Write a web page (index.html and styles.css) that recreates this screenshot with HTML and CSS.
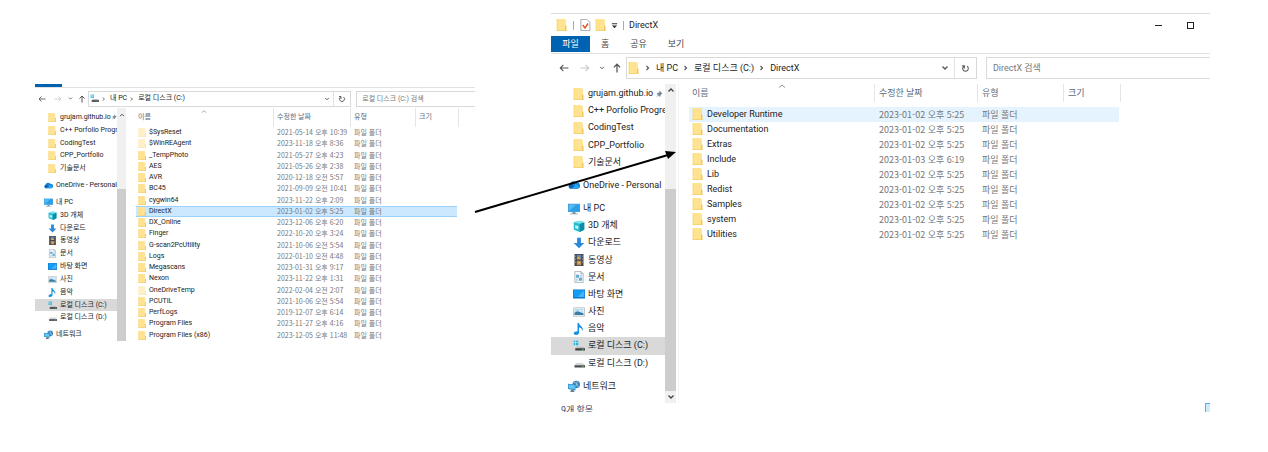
FILE: index.html
```html
<!DOCTYPE html>
<html lang="ko">
<head>
<meta charset="utf-8">
<title>DirectX</title>
<link rel="stylesheet" href="styles.css">
</head>
<body>
<svg class="sprite" aria-hidden="true">
  <symbol id="folder" viewBox="0 0 16 16"><path d="M1 0h11v16H1z" fill="#ffe391"/><path d="M1 0h1v16H1z" fill="#f8d673"/><path d="M12 1h1v9h-1z" fill="#fbdc7c"/><path d="M12 9h2v7h-2z" fill="#f0c75a"/><path d="M1 15h13v1H1z" fill="#f3cd66"/></symbol>
  <symbol id="cloud" viewBox="0 0 16 16"><path d="M4 13a4 4 0 0 1-1-7 4.500 4.500 0 0 1 8-1 4 4 0 0 1 2 8z" fill="#1683d8"/><path d="M4 13l6-6 3 1a3 3 0 0 1 0 5z" fill="#2aa5f0"/><path d="M1 9a3 3 0 0 1 3-3l5 3-5 4a3 3 0 0 1-3-4z" fill="#0b62b5"/></symbol>
  <symbol id="pc" viewBox="0 0 16 16"><path d="M0 1h16v11H0z" fill="#3b9ad9"/><path d="M1 2h14v9H1z" fill="#52bdf5"/><path d="M1 11L11 2h4v9z" fill="#2c9fe6"/><path d="M6 12h4v2h3v1H3v-1h3z" fill="#7d96a8"/></symbol>
  <symbol id="cube" viewBox="0 0 16 16"><path d="M1 3l8-2 6 2v10l-6 3-8-3z" fill="#28bdd1"/><path d="M9 5l6-2v10l-6 3z" fill="#0c8ca8"/><path d="M1 3l8-2 6 2-6 2z" fill="#7be5ed"/><path d="M3 7l4 1v4l-4-1z" fill="#c3f4f7"/></symbol>
  <symbol id="down" viewBox="0 0 16 16"><path d="M5.500 1h5v7H15l-7 7-7-7h4.500z" fill="#2b88d8"/></symbol>
  <symbol id="film" viewBox="0 0 16 16"><path d="M2 0h12v16H2z" fill="#45464d"/><path d="M5 1h6v6H5z" fill="#5c83c4"/><path d="M5 9h6v6H5z" fill="#b18b55"/><path d="M7 3l4 4H5zM6 10h4v3H6z" fill="#e0b04f"/><path d="M3 2h1v2H3zm0 4h1v2H3zm0 4h1v2H3zm9-8h1v2h-1zm0 4h1v2h-1zm0 4h1v2h-1z" fill="#999"/></symbol>
  <symbol id="doc" viewBox="0 0 16 16"><path d="M2.500.5h8l3 3v12h-11z" fill="#f5fafc" stroke="#98a6af"/><path d="M10.500.5v3h3" fill="none" stroke="#98a6af"/><path d="M4 5h4v4H4zM8 9h4v4H8z" fill="#64abd5"/><path d="M9 6h3M9 8h3M4 11h3M4 13h3" stroke="#8ebdd8"/></symbol>
  <symbol id="desk" viewBox="0 0 16 16"><path d="M0 2h16v12H0z" fill="#0878d1"/><path d="M1 3h14v9H1z" fill="#159cf4"/><path d="M6 12l9-9v9z" fill="#45b5fa"/></symbol>
  <symbol id="photo" viewBox="0 0 16 16"><path d="M.5 2.500h15v11H.5z" fill="#fff" stroke="#a5aeb4"/><path d="M2 4h12v8H2z" fill="#b5dcf5"/><path d="M2 9l4-2 8 3v2H2z" fill="#397da2"/><path d="M8 6h5v1H8z" fill="#fff"/></symbol>
  <symbol id="music" viewBox="0 0 16 16"><path d="M6 0h2c0 4 6 4 5 10h-1c0-3-2-4-4-4v7c0 2-2 3-4 3s-3-1-3-2c0-2 2-3 5-3z" fill="#1691e6"/></symbol>
  <symbol id="drivec" viewBox="0 0 16 16"><path d="M1 1h2v2H1zm3 0h3v2H4zM1 4h2v3H1zm3 0h3v3H4z" fill="#1fb6ea"/><path d="M5 9h8l3 2H3z" fill="#b9bcbe"/><path d="M3 11h13v3H3z" fill="#3b3f42"/><path d="M12 12h2v1h-2z" fill="#72dc72"/></symbol>
  <symbol id="drived" viewBox="0 0 16 16"><path d="M4 8h9l3 3H2z" fill="#d3d6d8"/><path d="M2 11h14v3H2z" fill="#474b4e"/><path d="M12 12h2v1h-2z" fill="#72dc72"/></symbol>
  <symbol id="net" viewBox="0 0 16 16"><circle cx="11" cy="6" r="5" fill="#3c83b8"/><path d="M8 3c3 1 5 3 6 7M9 10c2-2 3-5 3-8" stroke="#a4d6f2" fill="none"/><path d="M0 5l10 1v8L0 12z" fill="#2b93d1"/><path d="M1 6l8 1v5l-8-1z" fill="#68c4f1"/><path d="M4 13h3l2 3H3z" fill="#6c7e89"/></symbol>
  <symbol id="back" viewBox="0 0 16 16"><path d="M15 8H2M7 3L2 8l5 5" fill="none" stroke="currentColor" stroke-width="1.700"/></symbol>
  <symbol id="fwd" viewBox="0 0 16 16"><path d="M1 8h13M9 3l5 5-5 5" fill="none" stroke="currentColor" stroke-width="1.700"/></symbol>
  <symbol id="upward" viewBox="0 0 16 16"><path d="M8 15V2M3 7l5-5 5 5" fill="none" stroke="currentColor" stroke-width="2"/></symbol>
  <symbol id="chev" viewBox="0 0 16 16"><path d="M3 5l5 5 5-5" fill="none" stroke="currentColor" stroke-width="2.600"/></symbol>
  <symbol id="chevup" viewBox="0 0 16 16"><path d="M3 11l5-5 5 5" fill="none" stroke="currentColor" stroke-width="2.600"/></symbol>
  <symbol id="sort" viewBox="0 0 16 16"><path d="M2 7l6-5 6 5" fill="none" stroke="currentColor" stroke-width="1.800"/></symbol>
  <symbol id="crumb" viewBox="0 0 16 16"><path d="M5 4l4 4-4 4" fill="none" stroke="currentColor" stroke-width="2.400"/></symbol>
  <symbol id="reload" viewBox="0 0 16 16"><path d="M11 4a5 5 0 1 1-6 0M6 8V3H2" fill="none" stroke="currentColor" stroke-width="1.800"/></symbol>
  <symbol id="pin" viewBox="0 0 16 16"><path d="M9 1l6 6-2 1-2 3-1 3-3-3-5 4 4-5-3-3 3-1 3-2z" fill="#7b8a96"/></symbol>
  <symbol id="check" viewBox="0 0 16 16"><path d="M2.500.5h8l4 4v11h-12z" fill="#fff" stroke="#8a8f96"/><path d="M5 8l3 4 4-6" fill="none" stroke="#e2592a" stroke-width="2"/></symbol>
  <symbol id="custom" viewBox="0 0 16 16"><path d="M2 3h12v2H2zM2 8h12l-6 6z" fill="#333"/></symbol>
</svg>

<main class="desktop">
  <section class="window small" aria-label="로컬 디스크 (C:)">
    <div class="tabs"><span class="tab-edge"></span></div>
    <nav class="navbar">
      <button class="tool" aria-label="뒤로"><svg><use href="#back"/></svg></button>
      <button class="tool off" aria-label="앞으로"><svg><use href="#fwd"/></svg></button>
      <button class="tool tiny" aria-label="최근 위치"><svg><use href="#chev"/></svg></button>
      <button class="tool" aria-label="위로"><svg><use href="#upward"/></svg></button>
      <div class="address">
        <svg class="icon"><use href="#drivec"/></svg>
        <svg class="sep"><use href="#crumb"/></svg><button class="crumb">내 PC</button>
        <svg class="sep"><use href="#crumb"/></svg><button class="crumb">로컬 디스크 (C:)</button>
        <button class="drop" aria-label="이전 위치"><svg><use href="#chev"/></svg></button>
        <button class="reload" aria-label="새로 고침"><svg><use href="#reload"/></svg></button>
      </div>
      <input class="search" type="search" aria-label="검색" placeholder="로컬 디스크 (C:) 검색">
    </nav>
    <div class="content">
      <div class="side">
        <ul class="tree">
          <li class="child"><svg class="icon"><use href="#folder"/></svg>grujam.github.io<svg class="pin"><use href="#pin"/></svg></li>
          <li class="child"><svg class="icon"><use href="#folder"/></svg>C++ Porfolio Progre</li>
          <li class="child"><svg class="icon"><use href="#folder"/></svg>CodingTest</li>
          <li class="child"><svg class="icon"><use href="#folder"/></svg>CPP_Portfolio</li>
          <li class="child"><svg class="icon"><use href="#folder"/></svg>기술문서</li>
          <li class="root"><svg class="icon"><use href="#cloud"/></svg>OneDrive - Personal</li>
          <li class="root"><svg class="icon"><use href="#pc"/></svg>내 PC</li>
          <li class="child"><svg class="icon"><use href="#cube"/></svg>3D 개체</li>
          <li class="child"><svg class="icon"><use href="#down"/></svg>다운로드</li>
          <li class="child"><svg class="icon"><use href="#film"/></svg>동영상</li>
          <li class="child"><svg class="icon"><use href="#doc"/></svg>문서</li>
          <li class="child"><svg class="icon"><use href="#desk"/></svg>바탕 화면</li>
          <li class="child"><svg class="icon"><use href="#photo"/></svg>사진</li>
          <li class="child"><svg class="icon"><use href="#music"/></svg>음악</li>
          <li class="child current"><svg class="icon"><use href="#drivec"/></svg>로컬 디스크 (C:)</li>
          <li class="child"><svg class="icon"><use href="#drived"/></svg>로컬 디스크 (D:)</li>
          <li class="root"><svg class="icon"><use href="#net"/></svg>네트워크</li>
        </ul>
        <div class="scroll"><svg><use href="#chevup"/></svg><span class="thumb"></span></div>
      </div>
      <table class="files">
        <colgroup><col class="c-name"><col class="c-date"><col class="c-type"><col class="c-size"></colgroup>
        <thead><tr><th>이름<svg class="sort"><use href="#sort"/></svg></th><th>수정한 날짜</th><th>유형</th><th>크기</th></tr></thead>
        <tbody>
          <tr class="hidden-item"><td><svg class="icon"><use href="#folder"/></svg>$SysReset</td><td>2021-05-14 오후 10:39</td><td>파일 폴더</td><td></td></tr>
          <tr class="hidden-item"><td><svg class="icon"><use href="#folder"/></svg>$WinREAgent</td><td>2023-11-18 오후 8:36</td><td>파일 폴더</td><td></td></tr>
          <tr><td><svg class="icon"><use href="#folder"/></svg>_TempPhoto</td><td>2021-05-27 오후 4:23</td><td>파일 폴더</td><td></td></tr>
          <tr><td><svg class="icon"><use href="#folder"/></svg>AES</td><td>2021-05-26 오후 2:38</td><td>파일 폴더</td><td></td></tr>
          <tr><td><svg class="icon"><use href="#folder"/></svg>AVR</td><td>2020-12-18 오전 5:57</td><td>파일 폴더</td><td></td></tr>
          <tr><td><svg class="icon"><use href="#folder"/></svg>BC45</td><td>2021-09-09 오전 10:41</td><td>파일 폴더</td><td></td></tr>
          <tr><td><svg class="icon"><use href="#folder"/></svg>cygwin64</td><td>2023-11-22 오후 2:09</td><td>파일 폴더</td><td></td></tr>
          <tr class="selected"><td><svg class="icon"><use href="#folder"/></svg>DirectX</td><td>2023-01-02 오후 5:25</td><td>파일 폴더</td><td></td></tr>
          <tr><td><svg class="icon"><use href="#folder"/></svg>DX_Online</td><td>2023-12-06 오후 6:20</td><td>파일 폴더</td><td></td></tr>
          <tr><td><svg class="icon"><use href="#folder"/></svg>Finger</td><td>2022-10-20 오후 3:24</td><td>파일 폴더</td><td></td></tr>
          <tr><td><svg class="icon"><use href="#folder"/></svg>G-scan2PcUtility</td><td>2021-10-06 오전 5:54</td><td>파일 폴더</td><td></td></tr>
          <tr><td><svg class="icon"><use href="#folder"/></svg>Logs</td><td>2022-01-10 오전 4:48</td><td>파일 폴더</td><td></td></tr>
          <tr><td><svg class="icon"><use href="#folder"/></svg>Megascans</td><td>2023-01-31 오후 9:17</td><td>파일 폴더</td><td></td></tr>
          <tr><td><svg class="icon"><use href="#folder"/></svg>Nexon</td><td>2023-11-22 오후 1:31</td><td>파일 폴더</td><td></td></tr>
          <tr class="hidden-item"><td><svg class="icon"><use href="#folder"/></svg>OneDriveTemp</td><td>2022-02-04 오전 2:07</td><td>파일 폴더</td><td></td></tr>
          <tr><td><svg class="icon"><use href="#folder"/></svg>PCUTIL</td><td>2021-10-06 오전 5:54</td><td>파일 폴더</td><td></td></tr>
          <tr><td><svg class="icon"><use href="#folder"/></svg>PerfLogs</td><td>2019-12-07 오후 6:14</td><td>파일 폴더</td><td></td></tr>
          <tr><td><svg class="icon"><use href="#folder"/></svg>Program Files</td><td>2023-11-27 오후 4:16</td><td>파일 폴더</td><td></td></tr>
          <tr><td><svg class="icon"><use href="#folder"/></svg>Program Files (x86)</td><td>2023-12-05 오후 11:48</td><td>파일 폴더</td><td></td></tr>
        </tbody>
      </table>
    </div>
  </section>

  <section class="window large" aria-label="DirectX">
    <header class="titlebar">
      <svg class="icon"><use href="#folder"/></svg><span class="bar"></span>
      <svg class="icon"><use href="#check"/></svg><svg class="icon"><use href="#folder"/></svg>
      <svg class="custom"><use href="#custom"/></svg><span class="bar"></span>
      <h1 class="title">DirectX</h1>
      <button class="win-btn" aria-label="최소화"><span class="minimize"></span></button>
      <button class="win-btn" aria-label="최대화"><span class="maximize"></span></button>
    </header>
    <div class="tabs">
      <button class="tab active">파일</button><button class="tab">홈</button><button class="tab">공유</button><button class="tab">보기</button>
    </div>
    <nav class="navbar">
      <button class="tool" aria-label="뒤로"><svg><use href="#back"/></svg></button>
      <button class="tool off" aria-label="앞으로"><svg><use href="#fwd"/></svg></button>
      <button class="tool tiny" aria-label="최근 위치"><svg><use href="#chev"/></svg></button>
      <button class="tool" aria-label="위로"><svg><use href="#upward"/></svg></button>
      <div class="address">
        <svg class="icon"><use href="#folder"/></svg>
        <svg class="sep"><use href="#crumb"/></svg><button class="crumb">내 PC</button>
        <svg class="sep"><use href="#crumb"/></svg><button class="crumb">로컬 디스크 (C:)</button>
        <svg class="sep"><use href="#crumb"/></svg><button class="crumb">DirectX</button>
        <button class="drop" aria-label="이전 위치"><svg><use href="#chev"/></svg></button>
        <button class="reload" aria-label="새로 고침"><svg><use href="#reload"/></svg></button>
      </div>
      <input class="search" type="search" aria-label="검색" placeholder="DirectX 검색">
    </nav>
    <div class="content">
      <div class="side">
        <ul class="tree">
          <li class="child"><svg class="icon"><use href="#folder"/></svg>grujam.github.io<svg class="pin"><use href="#pin"/></svg></li>
          <li class="child"><svg class="icon"><use href="#folder"/></svg>C++ Porfolio Progre</li>
          <li class="child"><svg class="icon"><use href="#folder"/></svg>CodingTest</li>
          <li class="child"><svg class="icon"><use href="#folder"/></svg>CPP_Portfolio</li>
          <li class="child"><svg class="icon"><use href="#folder"/></svg>기술문서</li>
          <li class="root"><svg class="icon"><use href="#cloud"/></svg>OneDrive - Personal</li>
          <li class="root"><svg class="icon"><use href="#pc"/></svg>내 PC</li>
          <li class="child"><svg class="icon"><use href="#cube"/></svg>3D 개체</li>
          <li class="child"><svg class="icon"><use href="#down"/></svg>다운로드</li>
          <li class="child"><svg class="icon"><use href="#film"/></svg>동영상</li>
          <li class="child"><svg class="icon"><use href="#doc"/></svg>문서</li>
          <li class="child"><svg class="icon"><use href="#desk"/></svg>바탕 화면</li>
          <li class="child"><svg class="icon"><use href="#photo"/></svg>사진</li>
          <li class="child"><svg class="icon"><use href="#music"/></svg>음악</li>
          <li class="child current"><svg class="icon"><use href="#drivec"/></svg>로컬 디스크 (C:)</li>
          <li class="child"><svg class="icon"><use href="#drived"/></svg>로컬 디스크 (D:)</li>
          <li class="root"><svg class="icon"><use href="#net"/></svg>네트워크</li>
        </ul>
        <div class="scroll"><svg><use href="#chevup"/></svg><span class="thumb"></span><svg><use href="#chev"/></svg></div>
      </div>
      <table class="files">
        <colgroup><col class="c-name"><col class="c-date"><col class="c-type"><col class="c-size"></colgroup>
        <thead><tr><th>이름<svg class="sort"><use href="#sort"/></svg></th><th>수정한 날짜</th><th>유형</th><th>크기</th></tr></thead>
        <tbody>
          <tr class="hover"><td><svg class="icon"><use href="#folder"/></svg>Developer Runtime</td><td>2023-01-02 오후 5:25</td><td>파일 폴더</td><td></td></tr>
          <tr><td><svg class="icon"><use href="#folder"/></svg>Documentation</td><td>2023-01-02 오후 5:25</td><td>파일 폴더</td><td></td></tr>
          <tr><td><svg class="icon"><use href="#folder"/></svg>Extras</td><td>2023-01-02 오후 5:25</td><td>파일 폴더</td><td></td></tr>
          <tr><td><svg class="icon"><use href="#folder"/></svg>Include</td><td>2023-01-03 오후 6:19</td><td>파일 폴더</td><td></td></tr>
          <tr><td><svg class="icon"><use href="#folder"/></svg>Lib</td><td>2023-01-02 오후 5:25</td><td>파일 폴더</td><td></td></tr>
          <tr><td><svg class="icon"><use href="#folder"/></svg>Redist</td><td>2023-01-02 오후 5:25</td><td>파일 폴더</td><td></td></tr>
          <tr><td><svg class="icon"><use href="#folder"/></svg>Samples</td><td>2023-01-02 오후 5:25</td><td>파일 폴더</td><td></td></tr>
          <tr><td><svg class="icon"><use href="#folder"/></svg>system</td><td>2023-01-02 오후 5:25</td><td>파일 폴더</td><td></td></tr>
          <tr><td><svg class="icon"><use href="#folder"/></svg>Utilities</td><td>2023-01-02 오후 5:25</td><td>파일 폴더</td><td></td></tr>
        </tbody>
      </table>
    </div>
    <footer class="status"><span>9개 항목</span><span class="view-btn"></span></footer>
    <svg class="arrow" viewBox="0 0 201 60" aria-hidden="true"><path d="M0 60L193 3" stroke="#000" stroke-width="2"/><path d="M201 0l-8 7-3-8z"/></svg>
  </section>
</main>
</body>
</html>
```
FILE: styles.css
```css
* { box-sizing: border-box; }
body { margin: 0; background: #fff; color: #222; font-family: Roboto, "Noto Sans CJK KR", sans-serif; }
button, input { font: inherit; color: inherit; background: none; border: 0; padding: 0; margin: 0; }
svg { display: block; flex: none; }
.sprite { position: absolute; width: 0; height: 0; }

.desktop {
  display: grid;
  grid-template-columns: 440fr 659fr;
  column-gap: 76px;
  align-items: start;
  padding: 13px 58px 0 35px;
}
.window { position: relative; min-width: 0; line-height: 1; }
.small { --icon: 9px; --glyph: 6px; margin-top: 71px; font-size: 7px; }
.large { --icon: 12px; --glyph: 8px; border-top: 1px solid #dcdcdc; font-size: 9px; }
.icon { width: var(--icon); height: var(--icon); }

/* title bar */
.titlebar { display: flex; align-items: center; gap: 4px; height: 22px; padding-left: 5px; }
.titlebar .bar { width: 1px; height: 9px; margin: 0 1px; background: #aaa; }
.custom { width: 7px; height: 7px; }
.title { flex: 1; margin: 0; font-size: 9px; font-weight: 400; }
.win-btn { display: grid; place-items: center; width: 28px; height: 22px; }
.win-btn:last-child { margin-right: 6px; }
.minimize { width: 7px; height: 1px; background: #222; }
.maximize { width: 7px; height: 7px; border: 1px solid #222; }

/* ribbon tabs */
.tabs { display: flex; border-bottom: 1px solid #e2e2e2; }
.small .tabs { height: 4px; }
.large .tabs { height: 18px; }
.tab-edge { width: 27px; height: 3px; background: #0063b1; }
.tab { height: 16px; padding: 0 10px; color: #444; }
.tab.active { width: 39px; padding: 0; background: #0063b1; color: #fff; }
.tab + .tab { margin-left: 1px; }

/* navigation row */
.navbar { display: flex; align-items: center; }
.small .navbar { height: 20px; padding-top: 1px; }
.large .navbar { height: 30px; padding-bottom: 2px; }
.tool { display: grid; place-items: center; color: #555; }
.tool svg { width: 100%; height: auto; aspect-ratio: 1; }
.tool.off { color: #c8c8c8; }
.small .tool { width: 8px; margin-left: 8px; }
.small .tool:first-child { margin-left: 3px; }
.small .tool.tiny { width: 5px; margin-left: 6px; }
.small .tool.tiny + .tool { margin-left: 5px; }
.large .tool { width: 10px; margin-left: 11px; }
.large .tool:first-child { margin-left: 8px; }
.large .tool.tiny { width: 6px; margin-left: 9px; }
.large .tool.tiny + .tool { margin-left: 7px; }
.address { display: flex; flex: 1; align-items: center; padding-left: 1px; border: 1px solid #d9d9d9; white-space: nowrap; }
.small .address { height: 16px; margin-left: 2px; }
.large .address { height: 22px; margin-left: 4px; }
.sep { width: var(--glyph); height: var(--glyph); color: #555; }
.small .sep { margin: 0 3px 0 2px; }
.large .sep { margin: 0 4px; }
.drop { margin-left: auto; }
.drop svg, .reload svg { width: var(--glyph); height: var(--glyph); }
.drop, .reload { color: #555; }
.reload { display: grid; place-items: center; align-self: stretch; border-left: 1px solid #e2e2e2; }
.small .reload { width: 17px; margin-left: 3px; }
.large .reload { width: 22px; margin-left: 5px; }
.small .reload svg { width: 8px; height: 8px; }
.large .reload svg { width: 9px; height: 9px; }
.search { flex: none; min-width: 0; border: 1px solid #d9d9d9; border-right: 0; border-radius: 0; appearance: none; }
.search::placeholder { color: #777; opacity: 1; }
.small .search { width: 27%; height: 16px; margin-left: 5px; padding-left: 5px; }
.large .search { width: 34%; height: 22px; margin-left: 9px; padding-left: 6px; }

/* panes */
.content { display: flex; align-items: flex-start; }
.side { display: flex; flex: none; }
.small .side { width: 91px; height: 233px; }
.large .side { width: 128px; height: 319px; border-right: 1px solid #f3f3f3; }
.tree { display: flex; flex-direction: column; flex: none; margin: 0; padding: 0; list-style: none; overflow: hidden; }
.small .tree { width: 82px; height: 230px; margin-top: 3px; }
.large .tree { width: 114px; height: 310px; margin-top: 1px; }
.tree li { display: flex; flex: 1; align-items: center; gap: 3px; white-space: nowrap; }
.small .root { margin-top: 4px; padding-left: 9px; }
.small .child { padding-left: 13px; }
.large .root { margin-top: 6px; padding-left: 17px; }
.large .child { padding-left: 22px; }
.current { background: #d9d9d9; }
.pin { width: var(--glyph); height: var(--glyph); margin-left: -1px; }
.small .pin { margin-left: -3px; }
.scroll { display: flex; flex-direction: column; align-items: center; background: #f0f0f0; color: #444; }
.small .scroll { width: 9px; }
.large .scroll { width: 11px; margin-left: auto; }
.scroll svg { width: var(--glyph); height: var(--glyph); }
.small .scroll svg { margin-top: 4px; }
.large .scroll svg { margin: 2px 0; }
.large .scroll { margin-right: 2px; }
.thumb { flex: 1; width: 100%; background: #cdcdcd; }
.small .thumb { margin-top: 71px; }
.large .thumb { margin-top: 93px; }

/* file list */
.files { table-layout: fixed; border-collapse: separate; border-spacing: 0; }
.files th, .files td { padding: 0; font-weight: 400; text-align: left; white-space: nowrap; vertical-align: middle; }
.files th { position: relative; border-right: 1px solid #e5e5e5; color: #5a6b80; }
.files td { color: #777; font-family: "Noto Sans CJK KR", sans-serif; }
.files td:first-child { color: #222; font-family: Roboto, "Noto Sans CJK KR", sans-serif; }
.files td .icon { display: inline-block; margin-top: 1px; vertical-align: top; }
.sort { position: absolute; top: 0; left: 50%; width: var(--glyph); height: var(--glyph); margin-left: -4px; color: #888; }
.small .files { width: 323px; height: 233px; margin-left: 10px; }
.small .c-name { width: 138px; }
.small .c-date { width: 77px; }
.small .c-type { width: 65px; }
.small .sort { top: 2px; }
.small .files th { height: 19px; padding-left: 3px; }
.small .files td { padding-left: 3px; line-height: 11px; }
.small .files th:first-child, .small .files td:first-child { padding-left: 2px; }
.small .files .icon { margin-right: 2px; }
.large .files { width: 432px; margin-left: 10px; }
.large .c-name { width: 186px; }
.large .c-date { width: 103px; }
.large .c-type { width: 86px; }
.large .files th { height: 18px; padding-left: 4px; }
.large .files tbody::before { content: ""; display: table-row; height: 5px; }
.large .files td { height: 15px; padding-left: 4px; line-height: 15px; }
.large .files th:first-child, .large .files td:first-child { padding-left: 3px; }
.large .files .icon { margin-right: 3px; }
.files td:last-child { border-right: 2px solid transparent; background-clip: padding-box; }
.hidden-item .icon { opacity: 0.5; }
.selected td { background-color: #cce8ff; box-shadow: inset 0 1px #99d1ff, inset 0 -1px #99d1ff; }
.hover td { background-color: #e5f3ff; }

/* status bar */
.status { display: flex; justify-content: space-between; height: 9px; padding-left: 10px; overflow: hidden; color: #34496b; }
.status span:first-child { padding-top: 3px; }
.view-btn { width: 5px; border: 1px solid #55b5e4; border-right: 0; border-bottom: 0; background: #cdeafa; }

/* arrow from the selected folder to the opened window */
.arrow { position: absolute; top: 138px; left: -76px; width: 201px; height: 60px; overflow: visible; }
```
